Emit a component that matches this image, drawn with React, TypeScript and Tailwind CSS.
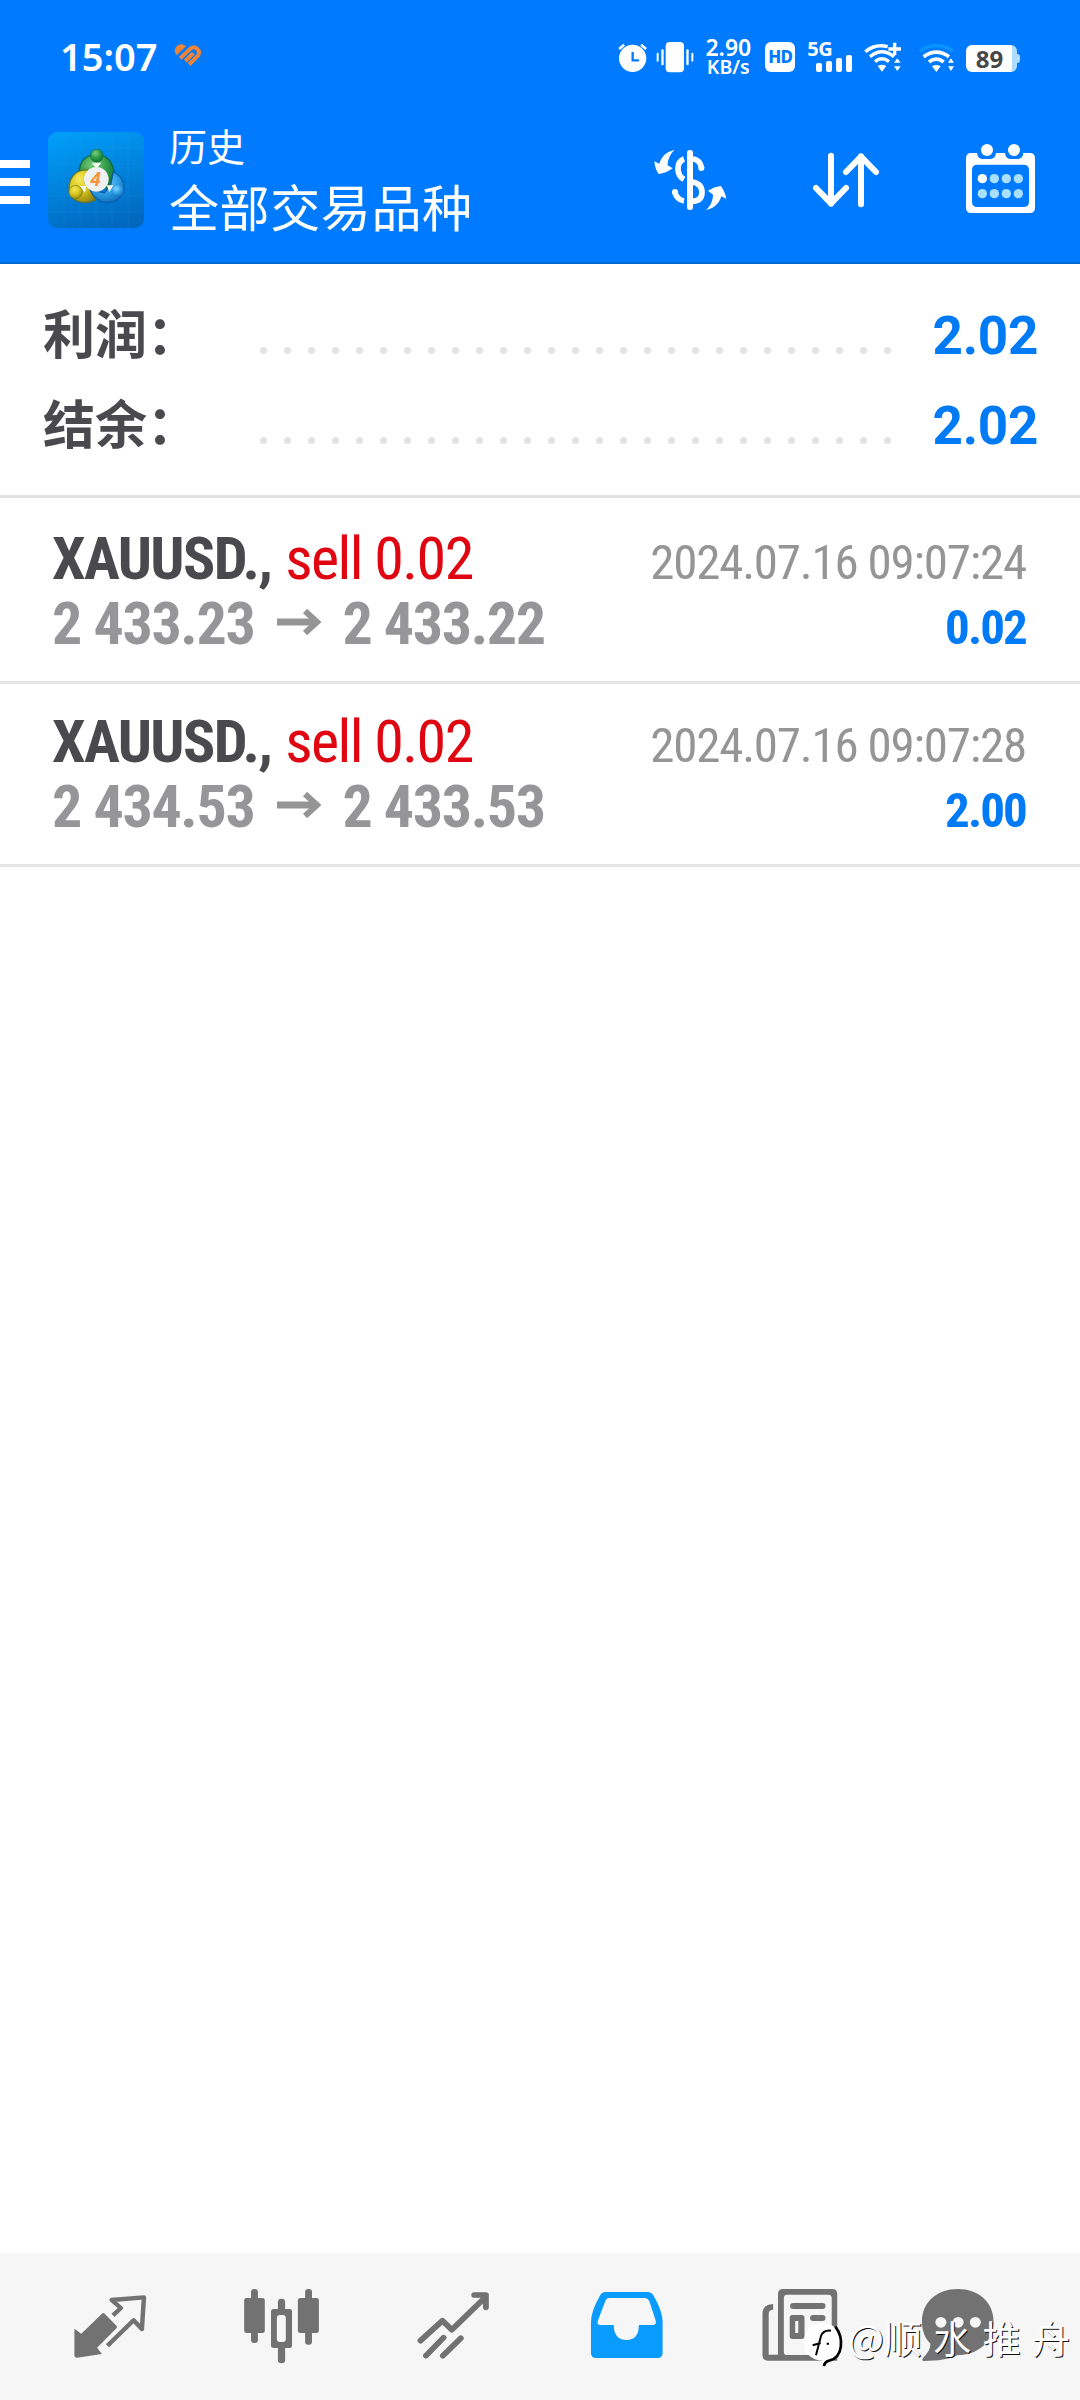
const summary = [
  { label: "利润：", value: "2.02" },
  { label: "结余：", value: "2.02" },
];

const deals = [
  { symbol: "XAUUSD.,", side: "sell 0.02", open: "2 433.23", close: "2 433.22", time: "2024.07.16 09:07:24", profit: "0.02" },
  { symbol: "XAUUSD.,", side: "sell 0.02", open: "2 434.53", close: "2 433.53", time: "2024.07.16 09:07:28", profit: "2.00" },
];

function StatusBar() {
  return (
    <div className="flex h-[114px] items-start pt-[37px] pl-[60px] font-['Noto_Sans',sans-serif] text-white">
      <span className="mt-[-1px] w-[112px] text-[38px] leading-[40px] font-semibold">15:07</span>
      <svg viewBox="0 0 40 36" className="mt-[2px] h-[34px] w-[38px]" fill="none" stroke="#ee8434">
        <path d="M5 17a6.500 6.500 0 0 1-1.500-7.500 7 7 0 0 1 9.500-3l2 1z" fill="#ee8434" stroke="none" />
        <path d="M8.500 20.500 19.500 10a5.600 5.600 0 0 1 8 7.500L18 27M14 23.500 22.500 15" strokeWidth="4.200" />
      </svg>
      <svg viewBox="54 51 91 120" className="ml-[408px] h-[40px] w-[30.300px]" fill="#fff">
        <circle cx="98" cy="115" r="41" />
        <path d="M55 84 70 71l5 6-15 13zM141 84l-15-13-5 6 15 13z" />
        <path d="M98 96v25h19" fill="none" stroke="#007bff" strokeWidth="7" />
      </svg>
      <svg viewBox="168 51 114 120" className="ml-[8px] h-[40px] w-[38px]" fill="#fff">
        <rect x="197" y="66" width="55" height="91" rx="12" />
        <rect x="184" y="88" width="7" height="48" rx="3" />
        <rect x="170" y="98" width="6" height="27" rx="3" />
        <rect x="259" y="88" width="7" height="48" rx="3" />
        <rect x="274" y="98" width="6" height="27" rx="3" />
      </svg>
      <div className="ml-[10px] w-[48px] text-center font-semibold">
        <div className="text-[23px] leading-[20px]">2.90</div>
        <div className="text-[19.500px] leading-[19px]">KB/s</div>
      </div>
      <div className="mt-[5px] ml-[13px] h-[30px] w-[30px] rounded-[6px] bg-white text-center text-[17px] leading-[30px] font-extrabold tracking-[-0.8px] text-[#007bff]">HD</div>
      <div className="relative ml-[12px] h-[40px] w-[45px]">
        <span className="absolute top-[2px] left-0 text-[20px] leading-[20px] font-bold tracking-[-0.5px]">5G</span>
        <div className="absolute right-0 bottom-[5px] flex items-end gap-[4px]">
          <i className="h-[9px] w-[6px] rounded-[2px] bg-white" />
          <i className="h-[11px] w-[6px] rounded-[2px] bg-white" />
          <i className="h-[14px] w-[6px] rounded-[2px] bg-white" />
          <i className="h-[17px] w-[6px] rounded-[2px] bg-white" />
        </div>
      </div>
      <svg viewBox="792 51 114 120" className="ml-[12px] h-[40px] w-[38px]" fill="#fff">
        <g fill="none" stroke="#fff" strokeWidth="10">
          <path d="M796 95Q826 70 863 80M810 110q36-30 72 0M825 125q21-17 42 0" />
          <path d="M865 87h38M884 68v38" />
        </g>
        <path d="M833 138q13-8 26 0l-13 17zM882 128l10-13 10 13zM882 139l10 14 10-14z" />
      </svg>
      <svg viewBox="954 51 112 120" className="ml-[16px] h-[40px] w-[37.300px]" fill="#fff">
        <path d="M959 93q50-33 100 0" fill="none" stroke="#0a94ff" strokeWidth="11" />
        <path d="M971 110q38-27 76 0M987 126q22-17 44 0" fill="none" stroke="#fff" strokeWidth="11" />
        <path d="M996 139q13-8 26 0l-13 17zM1044 128l9-13 9 13zM1044 139l9 14 9-14z" />
      </svg>
      <div className="mt-[8px] ml-[10px] flex items-center">
        <div className="h-[27px] w-[51px] rounded-[6px] border-r-[5px] border-[#aedcff] bg-white pl-[2px] text-center text-[24px] leading-[27px] font-bold text-[#47474a]">89</div>
        <div className="h-[9px] w-[3px] rounded-r-[3px] bg-[#aedcff]" />
      </div>
    </div>
  );
}

function AppLogo() {
  return (
    <svg viewBox="54 36 288 288" className="h-[96px] w-[96px] rounded-[9px]">
      <defs>
        <linearGradient id="tile" x1="0.3" y1="0" x2="0.6" y2="1">
          <stop offset="0" stopColor="#009cf6" />
          <stop offset="0.5" stopColor="#0082dc" />
          <stop offset="1" stopColor="#0068be" />
        </linearGradient>
        <radialGradient id="green" cx="0.4" cy="0.3" r="0.8">
          <stop offset="0" stopColor="#7dd07a" />
          <stop offset="0.5" stopColor="#2f9a4a" />
          <stop offset="1" stopColor="#0f6a2f" />
        </radialGradient>
        <radialGradient id="yellow" cx="0.4" cy="0.3" r="0.8">
          <stop offset="0" stopColor="#f6ea5a" />
          <stop offset="0.5" stopColor="#d8c41c" />
          <stop offset="1" stopColor="#8d7f10" />
        </radialGradient>
        <radialGradient id="blue" cx="0.4" cy="0.3" r="0.8">
          <stop offset="0" stopColor="#7fd3ff" />
          <stop offset="0.5" stopColor="#2f9fe6" />
          <stop offset="1" stopColor="#0a66b4" />
        </radialGradient>
      </defs>
      <rect x="54" y="36" width="288" height="288" fill="url(#tile)" />
      <path d="M102 36v288M150 36v288M198 36v288M246 36v288M294 36v288M54 84h288M54 132h288M54 228h288M54 276h288" stroke="#2fa2ee" strokeOpacity="0.25" strokeWidth="2" />
      <path d="M152 176C138 134 162 104 200 104c38 0 62 38 48 88l-18 14-20-56-30 2z" fill="url(#green)" stroke="#0d6a3f" strokeWidth="4" />
      <path d="M174 150c-42-4-62 32-56 68 10 30 52 36 78 22l-14-32-18-22z" fill="url(#yellow)" stroke="#5f7430" strokeWidth="4" />
      <path d="M250 156c30 14 40 46 26 68-22 34-74 32-96-14l44 8 18-24z" fill="url(#blue)" stroke="#0b5fa8" strokeWidth="4" />
      <path d="M186 128h28l-14 18zM148 198h20l-2 20zM230 196h20l-12 20z" fill="#f2fbf2" />
      <circle cx="200" cy="107" r="19" fill="url(#green)" stroke="#0d6a3f" strokeWidth="2" />
      <circle cx="137" cy="216" r="20" fill="url(#yellow)" stroke="#6f7a20" strokeWidth="2" />
      <circle cx="262" cy="213" r="18" fill="url(#blue)" />
      <circle cx="199" cy="178" r="37" fill="#eef1f2" />
      <text x="197" y="198" textAnchor="middle" fill="#f6953c" className="font-['Noto_Sans',sans-serif] text-[56px] font-bold italic">4</text>
    </svg>
  );
}

function TitleBar() {
  return (
    <div className="flex h-[149px] items-start text-white">
      <div className="mt-[46px] flex w-[30px] flex-col gap-[10px]">
        <i className="h-[8px] bg-white" />
        <i className="h-[8px] bg-white" />
        <i className="h-[8px] bg-white" />
      </div>
      <div className="mt-[18px] ml-[18px]">
        <AppLogo />
      </div>
      <div className="ml-[25px] w-[484px] font-['Noto_Sans_CJK_SC',sans-serif]">
        <div className="mt-[5px] text-[38px] leading-[52px]">历史</div>
        <div className="text-[50px] leading-[68px] tracking-[0.6px]">全部交易品种</div>
      </div>
      <svg viewBox="99 66 222 222" className="mt-[28px] h-[74px] w-[74px]" fill="#fff">
        <rect x="201" y="90" width="18" height="180" rx="8" />
        <path d="M192 117Q174 124 174 146T192 178M219 116q22 4 26 29M216 186q30 4 30 31t-30 27M164 215q6 24 28 28" fill="none" stroke="#fff" strokeWidth="17" />
        <circle cx="244" cy="144" r="9" />
        <circle cx="165" cy="216" r="9" />
        <path d="M164 90C140 95 125 108 118 131l-15-7q2 24 13 38 22-2 42-17l-15-9c0-16 7-34 21-46z" />
        <path d="M258 270c24-5 39-18 46-41l15 7q-5-24-17-38-20 2-38 14l15 12c0 16-7 34-21 46z" />
      </svg>
      <svg viewBox="576 66 210 222" className="mt-[28px] ml-[85px] h-[74px] w-[70px]" fill="none" stroke="#fff" strokeWidth="18" strokeLinecap="round" strokeLinejoin="round">
        <path d="M633 107v144M588 204l45 46 45-46M723 253V109M678 156l45-46 45 46" />
      </svg>
      <svg viewBox="1038 66 210 222" className="mt-[28px] ml-[84px] h-[74px] w-[70px]" fill="#fff">
        <path fillRule="evenodd" d="M1054 99h17q2 18 18 18h24q14-2 15-18h27q2 18 18 18h22q14-2 15-18h19q16 0 16 16v148q0 16-16 16h-175q-16 0-16-16V115q0-16 16-16zM1072 134q-16 0-16 16v95q0 16 16 16h138q17 0 17-16v-95q0-16-17-16z" />
        <circle cx="1101" cy="90" r="18" />
        <circle cx="1182" cy="90" r="18" />
        <circle cx="1087" cy="176" r="14" />
        <g fill="#a9e0ff">
          <circle cx="1123" cy="176" r="14" />
          <circle cx="1159" cy="176" r="14" />
          <circle cx="1195" cy="176" r="14" />
          <circle cx="1087" cy="221" r="14" />
          <circle cx="1123" cy="221" r="14" />
          <circle cx="1159" cy="221" r="14" />
          <circle cx="1195" cy="221" r="14" />
        </g>
      </svg>
    </div>
  );
}

// Tab icons share one coordinate space, so each viewBox is a 172px wide slice of the bar
function TabBar() {
  return (
    <nav className="relative flex h-[147px] bg-[#f6f6f6] pl-[24px]">
      <svg viewBox="69.700 39 499.400 441" preserveAspectRatio="none" className="h-[147px] w-[172px]" fill="#727272">
        <path d="M216 266l20 15 60-60q4-4 8 0l34 36q4 4 0 8l-56 58 14 19-72 11q-8 1-8-7z" />
        <path d="M328 226l23-22-27-24 94-8-6 95-24-26-76 76" fill="none" stroke="#727272" strokeWidth="13" strokeLinejoin="round" />
      </svg>
      <svg viewBox="569.200 39 499.400 441" preserveAspectRatio="none" className="h-[147px] w-[172px]" fill="#727272">
        <rect x="709" y="174" width="60" height="105" rx="7" />
        <rect x="729" y="147" width="20" height="162" rx="9" />
        <rect x="865" y="174" width="61" height="105" rx="7" />
        <rect x="886" y="147" width="20" height="167" rx="9" />
        <rect x="807" y="176" width="21" height="194" rx="10" />
        <rect x="787" y="207" width="61" height="117" rx="7" />
        <rect x="804" y="225" width="26" height="81" rx="9" fill="#f6f6f6" />
      </svg>
      <svg viewBox="1068.600 39 499.400 441" preserveAspectRatio="none" className="h-[147px] w-[172px]" fill="none" stroke="#727272" strokeWidth="17" strokeLinecap="round" strokeLinejoin="round">
        <path d="M1221 302l64-60 27 27 98-98M1237 347l51-54M1286 347l52-52M1377 165h34v37" />
      </svg>
      <svg viewBox="0 39 499.400 441" preserveAspectRatio="none" className="h-[147px] w-[172px]">
        <path d="M190 156h122q12 0 18 11 26 46 26 80v92q0 15-15 15H163q-15 0-15-15v-92q0-34 26-80 5-11 16-11z" fill="#0a9bff" />
        <path d="M200 174h104q9 0 13 8l19 60q3 13-9 13h-40q0 45-36 45t-37-45h-38q-12 0-8-13l22-60q3-8 10-8z" fill="#f6f6f6" />
      </svg>
      <svg viewBox="499.400 39 499.400 441" preserveAspectRatio="none" className="h-[147px] w-[172px]" fill="#727272">
        <path d="M677 192v17q-13 0-13 13v122h27V162q0-15 15-15h142q15 0 15 15v200H662q-16 0-16-16V222q0-30 31-30z" />
        <rect x="708" y="164" width="139" height="181" rx="10" fill="#f6f6f6" />
        <rect x="726" y="189" width="103" height="18" rx="9" />
        <rect x="725" y="225" width="43" height="72" rx="8" />
        <rect x="741" y="243" width="9" height="36" fill="#f6f6f6" />
        <rect x="784" y="225" width="45" height="18" rx="9" />
      </svg>
      <svg viewBox="998.800 39 499.400 441" preserveAspectRatio="none" className="h-[147px] w-[172px]">
        <path d="M1213 147c58 0 104 38 104 98s-46 100-104 100c-24 14-58 17-98 18q-8-1-4-7c14-16 24-30 22-46-16-16-24-40-24-65 0-60 46-98 104-98z" fill="#727272" />
        <circle cx="1164" cy="247" r="16" fill="#f6f6f6" />
        <circle cx="1214" cy="247" r="16" fill="#f6f6f6" />
        <circle cx="1264" cy="247" r="16" fill="#f6f6f6" />
      </svg>
      <div className="absolute top-[51px] left-[802px] flex items-center">
        <svg viewBox="24 0 126 165" className="mt-[10px] h-[55px] w-[42px]">
          <path d="M84 26c36 0 58 28 58 60s-18 50-38 60l-14 8-4-14c-34-2-56-22-56-54 0-34 22-60 54-60z" fill="#fff" />
          <path d="M124 38c26 34 24 92-18 102q-14 3-16 16" fill="none" stroke="#000" strokeWidth="8" />
          <path d="M111 50q-24-2-30 16l-15 58M56 94l24-7M98 89h7" fill="none" stroke="#000" strokeWidth="6" />
        </svg>
        <span className="ml-[4px] flex w-[222px] justify-between font-['Noto_Sans_CJK_SC',sans-serif] text-[38px] leading-[50px] text-white [text-shadow:1px_1px_0_#111]">
          <span>@顺</span>
          <span>水</span>
          <span>推</span>
          <span>舟</span>
        </span>
      </div>
    </nav>
  );
}

export default function App() {
  return (
    <div className="flex h-[2400px] w-[1080px] flex-col overflow-hidden bg-white">
      <header className="h-[264px] border-b-2 border-[#0069d2] bg-[#007bff]">
        <StatusBar />
        <TitleBar />
      </header>

      <section className="h-[234px] border-b-[3px] border-[#e4e4e4] pt-[23px]">
        {summary.map((row) => (
          <div key={row.label} className="flex h-[90px] items-baseline pr-[42px] pl-[43px] leading-[90px] font-bold">
            <span className="w-[217px] font-['Noto_Sans_CJK_SC',sans-serif] text-[52px] text-[#4a494e]">{row.label}</span>
            <div className="mb-[23px] flex w-[631px] justify-between self-end">
              {Array.from({ length: 27 }, (_, i) => (
                <i key={i} className="h-[7px] w-[7px] rounded-full bg-[#e3e3e3]" />
              ))}
            </div>
            <span className="ml-auto font-['Roboto',sans-serif] text-[53px] tracking-[-0.3px] text-[#007bf5]">{row.value}</span>
          </div>
        ))}
      </section>

      <main className="flex-1 font-['Roboto_Condensed',sans-serif]">
        {deals.map((deal) => (
          <div key={deal.time} className="h-[183px] border-b-[3px] border-[#e4e4e4] pt-[25px] pr-[54px] pl-[52px] first:h-[186px] first:pt-[28px]">
            <div className="flex h-[65px] items-baseline justify-between leading-[65px]">
              <div className="text-[60px]">
                <span className="font-bold tracking-[-1.600px] text-[#4a494e]">{deal.symbol}</span>{" "}
                <span className="tracking-[-1.550px] text-[#df0612]">{deal.side}</span>
              </div>
              <span className="text-[49px] tracking-[-1.200px] text-[#959595]">{deal.time}</span>
            </div>
            <div className="flex h-[65px] items-baseline justify-between leading-[65px] font-bold">
              <div className="flex items-center text-[60px] tracking-[-1.350px] text-[#969698]">
                <span>{deal.open}</span>
                <svg viewBox="0 0 44 26" className="mt-[-3px] mr-[21px] ml-[23px] h-[26px] w-[44px]" fill="none" stroke="#959595">
                  <path d="M0 13h40" strokeWidth="7" />
                  <path d="M28 2l12 11-12 11" strokeWidth="6" />
                </svg>
                <span>{deal.close}</span>
              </div>
              <span className="text-[49px] tracking-[-1.900px] text-[#007bf5]">{deal.profit}</span>
            </div>
          </div>
        ))}
      </main>

      <TabBar />
    </div>
  );
}
